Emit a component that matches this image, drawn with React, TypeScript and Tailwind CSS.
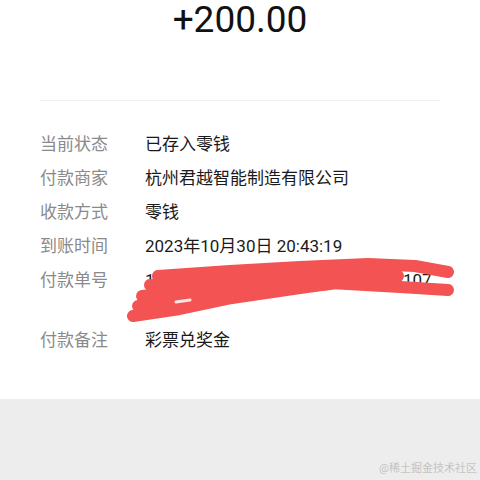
import React from "react";

interface RowProps {
  label: string;
  value: string;
  wrap?: boolean;
}

const Row: React.FC<RowProps> = ({ label, value, wrap }) => {
  return (
    <div className="flex text-[17px] leading-[26px]">
      <div className="w-[105px] shrink-0 text-[#8a8a8a]">{label}</div>
      <div className={wrap ? "flex-1 break-all text-[#1a1a1a]" : "flex-1 text-[#1a1a1a]"}>
        {value}
      </div>
    </div>
  );
};

const rows: RowProps[] = [
  { label: "当前状态", value: "已存入零钱" },
  { label: "付款商家", value: "杭州君越智能制造有限公司" },
  { label: "收款方式", value: "零钱" },
  { label: "到账时间", value: "2023年10月30日 20:43:19" },
  { label: "付款单号", value: "1000050001202310300184526731070742", wrap: true },
  { label: "付款备注", value: "彩票兑奖金" },
];

// the red scribble over the order number
const Scribble: React.FC = () => (
  <svg
    className="pointer-events-none absolute left-0 top-0"
    width="480"
    height="480"
    viewBox="0 0 480 480"
  >
    <g
      fill="none"
      stroke="#f45353"
      strokeWidth="12"
      strokeLinecap="round"
      strokeLinejoin="round"
    >
      <path d="M158 276 L230 271 L300 267 L368 264 L415 266 L448 272" />
      <path d="M150 285 L240 279 L320 275 L395 275" />
      <path d="M330 283 L400 287 L448 290" />
      <path d="M142 296 L210 289 L280 284 L345 279 L398 276" />
      <path d="M138 306 L200 300 L262 292 L338 282 L392 278" />
      <path d="M133 316 L180 309 L232 298 L300 288 L350 281" />
      <path d="M165 300 L240 292 L330 284" />
    </g>
    <path
      d="M176 302 L190 300"
      stroke="#ffffff"
      strokeWidth="3"
      strokeLinecap="round"
      opacity="0.85"
    />
  </svg>
);

export default function App() {
  return (
    <div
      className="relative flex h-[480px] w-[480px] flex-col overflow-hidden bg-[#ededed]"
      style={{ fontFamily: '"Roboto", "Noto Sans CJK SC", sans-serif' }}
    >
      <div className="bg-white pb-[46px]">
        <div className="pt-[2px] text-center text-[37px] font-normal leading-[35px] text-[#111111]">
          +200.00
        </div>
        <div className="mx-[40px] mt-[63px] border-t border-[#f0f0f0]" />
        <div className="flex flex-col gap-y-[8px] px-[40px] pt-[30px]">
          {rows.map((row, index) => (
            <Row key={index} label={row.label} value={row.value} wrap={row.wrap} />
          ))}
        </div>
      </div>
      <div className="flex flex-1 items-end justify-end pb-[4px] pr-[3px]">
        <span className="text-[11px] leading-[14px] text-[#c4c4c4]">@稀土掘金技术社区</span>
      </div>
      <Scribble />
    </div>
  );
}
